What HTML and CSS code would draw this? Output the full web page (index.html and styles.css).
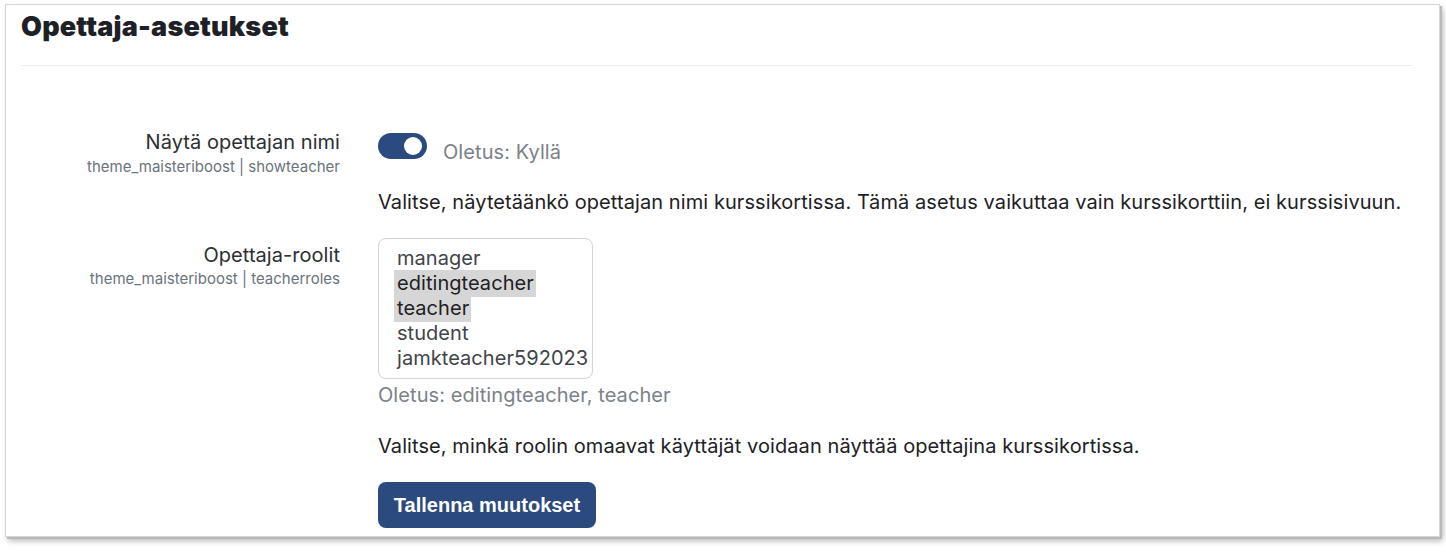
FILE: index.html
```html
<!DOCTYPE html>
<html lang="fi">
<head>
<meta charset="utf-8">
<title>Opettaja-asetukset</title>
<link rel="stylesheet" href="styles.css">
</head>
<body>
<div class="frame">
  <h2 class="title">Opettaja-asetukset</h2>
  <div class="rule"></div>
  <div class="setting setting-first">
    <div class="label">
      <div class="name">Näytä opettajan nimi</div>
      <div class="key">theme_maisteriboost | showteacher</div>
    </div>
    <div class="control">
      <div class="toggle-row">
        <span class="toggle"><span class="knob"></span></span>
        <span class="default default-inline">Oletus: Kyllä</span>
      </div>
      <p class="desc desc-first">Valitse, näytetäänkö opettajan nimi kurssikortissa. Tämä asetus vaikuttaa vain kurssikorttiin, ei kurssisivuun.</p>
    </div>
  </div>
  <div class="setting setting-second">
    <div class="label">
      <div class="name name-second">Opettaja-roolit</div>
      <div class="key key-second">theme_maisteriboost | teacherroles</div>
    </div>
    <div class="control">
      <div class="select">
        <div class="opt"><span>manager</span></div>
        <div class="opt"><span class="sel">editingteacher</span></div>
        <div class="opt"><span class="sel">teacher</span></div>
        <div class="opt"><span>student</span></div>
        <div class="opt"><span>jamkteacher592023</span></div>
      </div>
      <div class="default default-block">Oletus: editingteacher, teacher</div>
      <p class="desc desc-second">Valitse, minkä roolin omaavat käyttäjät voidaan näyttää opettajina kurssikortissa.</p>
      <button class="save">Tallenna muutokset</button>
    </div>
  </div>
</div>
</body>
</html>
```
FILE: styles.css
```css
* { box-sizing: border-box; }
html, body { margin: 0; padding: 0; background: #fff; }
body {
  font-family: Inter, "Noto Sans", sans-serif;
  color: #1d2125;
  width: 1446px;
  height: 553px;
  overflow: hidden;
}
.frame {
  margin: 4px 0 0 5px;
  width: 1435px;
  height: 533px;
  border: 1px solid #d6d6d6;
  box-shadow: 2px 2px 0 #b9b9b9, 3px 4px 6px rgba(0,0,0,0.28);
  padding: 0 26px 0 15px;
  overflow: hidden;
}
.title {
  margin: 5px 0 0 0;
  font-family: Inter, sans-serif;
  font-weight: 900;
  font-size: 27px;
  line-height: 34px;
  color: #1d2125;
  letter-spacing: 0.2px;
}
.rule {
  margin-top: 21px;
  height: 1px;
  background: #efefef;
}
.setting {
  display: grid;
  grid-template-columns: 319px 1fr;
  column-gap: 38px;
}
.setting-first { margin-top: 64px; }
.setting-second { margin-top: 24px; }
.label { text-align: right; }
.name {
  font-size: 20px;
  line-height: 24px;
  color: #2b2f33;
  letter-spacing: 0.05px;
}
.name-second { margin-top: 5px; }
.key {
  font-size: 15px;
  line-height: 18px;
  color: #6a737b;
  margin-top: 4px;
}
.key-second { margin-top: 3px; }
.toggle-row {
  display: flex;
  align-items: center;
  height: 26px;
  margin-top: 3px;
}
.toggle {
  width: 49px;
  height: 26px;
  border-radius: 13px;
  background: #2b4a7e;
  position: relative;
  display: inline-block;
  flex: none;
}
.knob {
  position: absolute;
  top: 4px;
  right: 5px;
  width: 18px;
  height: 18px;
  border-radius: 50%;
  background: #fff;
}
.default {
  color: #7b8289;
  font-size: 20px;
  line-height: 24px;
  letter-spacing: 0.08px;
}
.default-inline { margin-left: 16px; margin-top: 12px; }
.desc {
  margin: 0;
  font-size: 20px;
  line-height: 24px;
  color: #1d2125;
  letter-spacing: 0.08px;
}
.desc-first { margin-top: 31px; }
.select {
  width: 215px;
  height: 141px;
  border: 1px solid #ced4da;
  border-radius: 8px;
  padding: 7px 0 0 15px;
}
.opt {
  font-size: 20px;
  line-height: 25px;
  color: #3f4449;
  height: 25px;
  white-space: nowrap;
  letter-spacing: 0.05px;
}
.opt span { padding: 1px 2px 2px 3px; }
.opt .sel { background: #d6d6d6; color: #1d2125; }
.default-block { margin-top: 4px; }
.desc-second { margin-top: 27px; }
.save {
  margin-top: 24px;
  display: block;
  width: 218px;
  height: 46px;
  border: none;
  border-radius: 8px;
  background: #2b4a7e;
  color: #fff;
  font-family: "Liberation Sans", Arial, sans-serif;
  font-weight: 700;
  font-size: 20px;
  padding: 0;
}
```
